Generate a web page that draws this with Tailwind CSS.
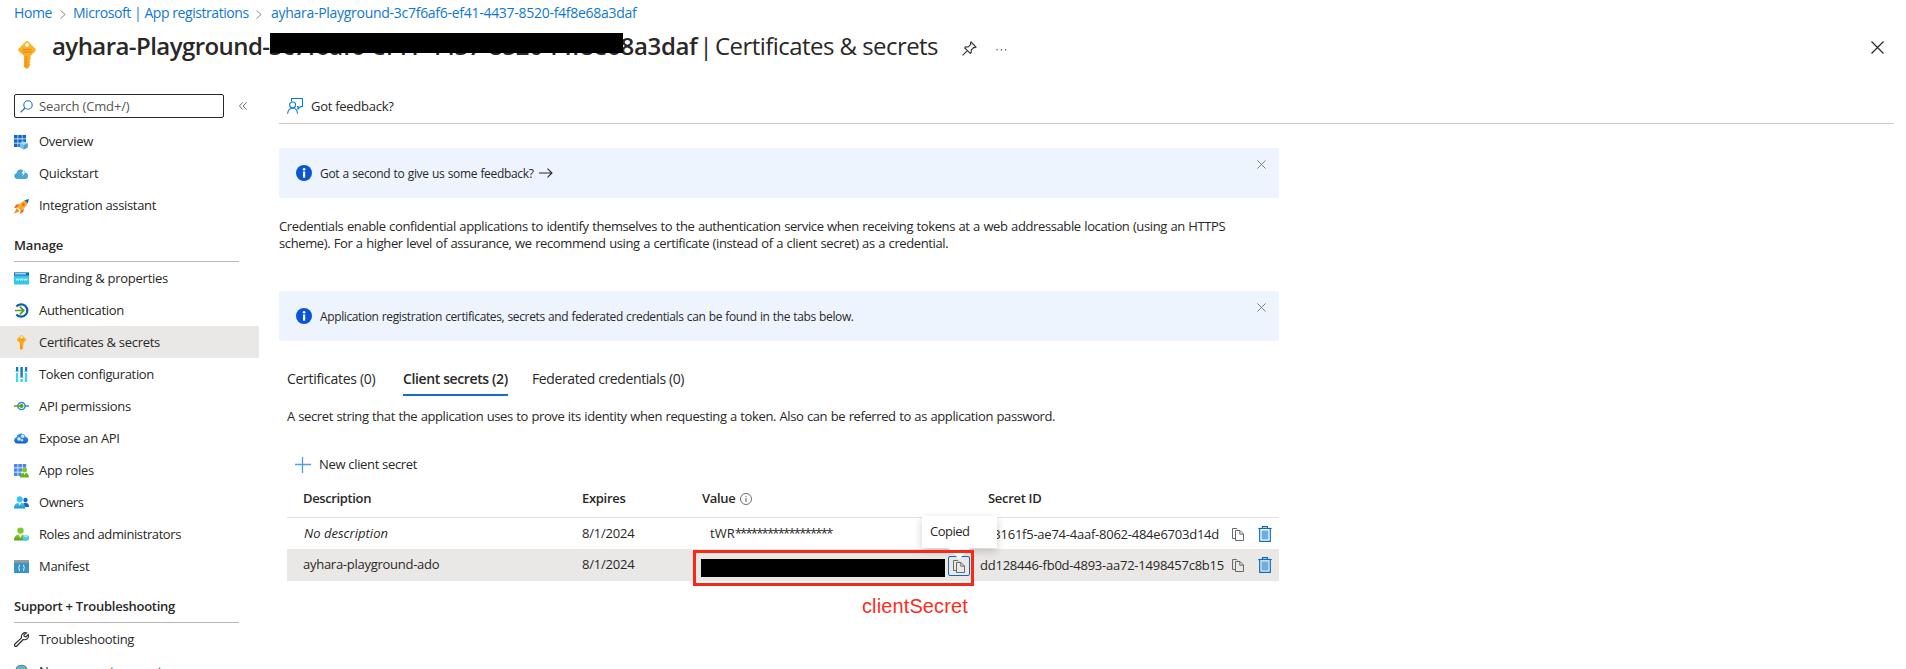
<!DOCTYPE html>
<html lang="en">
<head>
<meta charset="utf-8">
<title>Certificates &amp; secrets</title>
<script src="https://cdn.jsdelivr.net/npm/@tailwindcss/browser@4"></script>
</head>
<body class="h-[669px] overflow-hidden bg-white font-['Open_Sans',sans-serif] text-[13px] text-[#292827]">
<svg class="absolute h-0 w-0">
  <defs>
    <linearGradient id="gold" x1="0" y1="0" x2="0" y2="1"><stop offset="0" stop-color="#fdb92e"/><stop offset="1" stop-color="#fa9f1c"/></linearGradient>
    <linearGradient id="blue" x1="0" y1="0" x2="0" y2="1"><stop offset="0" stop-color="#3f9bee"/><stop offset="1" stop-color="#1160c8"/></linearGradient>
    <linearGradient id="cyan" x1="0" y1="0" x2="0" y2="1"><stop offset="0" stop-color="#3fd3f5"/><stop offset="1" stop-color="#1c93cf"/></linearGradient>
    <linearGradient id="green" x1="0" y1="0" x2="0" y2="1"><stop offset="0" stop-color="#8ed334"/><stop offset="1" stop-color="#569f16"/></linearGradient>
    <symbol id="key" viewBox="0 0 18 28">
      <path d="M7.6.6a2 2 0 0 1 2.8 0l6.8 6.9a2 2 0 0 1 0 2.8l-4.6 4.5v3.4l-1.3 1.3 1.3 1.3-1.3 1.4 1.3 1.4-1.3 1.5V26L9 28l-3-2V14.8L.8 10.300a2 2 0 0 1 0-2.800z" fill="url(#gold)"/>
      <circle cx="9" cy="4" r="1.9" fill="#fff"/><path d="M4.500 8.500h9M4.500 11h9" stroke="#e8921a" stroke-width="1.300"/><path d="M8 15v11" stroke="#f28c13" stroke-width="1.200"/>
    </symbol>
    <symbol id="copy" viewBox="0 0 12 13">
      <path d="M3.500 10.500h-3V.5h4.200l1 1M3.500 2.500h4.500l3.500 3.500v6.500h-8z" fill="none" stroke="#6b6a69"/><path d="M7.800 2.700V6.200h3.500" fill="none" stroke="#6b6a69"/>
    </symbol>
    <symbol id="trash" viewBox="0 0 14 16">
      <path d="M4.500 2V.6h5V2" fill="none" stroke="#0f6cbd" stroke-width="1.100"/><path d="M.3 2.500h13.400" stroke="#0f6cbd" stroke-width="1.200"/><path d="M1.700 2.500v12.900h10.600V2.500" fill="none" stroke="#0f6cbd" stroke-width="1.200"/><rect x="3.600" y="4.500" width="6.800" height="9" fill="#69aee4"/>
    </symbol>
    <symbol id="info" viewBox="0 0 16 16"><circle cx="8" cy="8" r="8" fill="#0a55d6"/><rect x="7" y="6.500" width="2.200" height="6.200" fill="#fff"/><circle cx="8.100" cy="4.300" r="1.300" fill="#fff"/></symbol>
    <symbol id="dismiss" viewBox="0 0 9 9"><path d="M.4.4l8.200 8.200M8.600.4L.4 8.600" stroke="#6f7681" stroke-width=".9"/></symbol>
  </defs>
</svg>

<nav class="flex h-[25px] items-center pl-[14px] text-sm text-[#0f78d4]">
  <span class="tracking-[-0.4px]">Home</span>
  <svg class="ml-[8px] mt-1 h-[9px] w-[6px]" viewBox="0 0 6 9"><path d="M.5.4l4.600 4.100L.5 8.600" fill="none" stroke="#8a8886"/></svg>
  <span class="ml-[7px] w-[183px] whitespace-nowrap tracking-[-0.44px]">Microsoft | App registrations</span>
  <svg class="mt-1 h-[9px] w-[6px]" viewBox="0 0 6 9"><path d="M.5.4l4.600 4.100L.5 8.600" fill="none" stroke="#8a8886"/></svg>
  <span class="ml-[9px] tracking-[-0.28px]">ayhara-Playground-3c7f6af6-ef41-4437-8520-f4f8e68a3daf</span>
</nav>

<header class="flex h-[41px] items-center pl-[18px] pr-[18px]">
  <svg class="mt-[19px] h-7 w-[18px]"><use href="#key"/></svg>
  <h1 class="relative ml-4 flex whitespace-nowrap text-2xl leading-[41px]">
    <span class="w-[217px] font-semibold tracking-[-0.56px]">ayhara-Playground-</span>
    <span class="w-[429px] font-semibold tracking-[-0.32px]">3c7f6af6-ef41-4437-8520-f4f8e68a3daf</span>
    <span class="w-[16px] text-center">|</span>
    <span class="ml-px w-[225px] tracking-[-0.55px]">Certificates &amp; secrets</span>
    <span class="absolute left-[218px] top-2 h-[20px] w-[353px] bg-black"></span>
  </h1>
  <svg class="ml-[22px] mt-[5px] h-[15px] w-[15px]" viewBox="0 0 15 15"><path d="M9 1l5 5-1.300.6-.9-.2-2.600 2.600.1 2.400-1 1.100L2.700 6.900l1-1 2.500.1L8.700 3.300 8.400 2zM5.300 9.700L.6 14.400" fill="none" stroke="#333" stroke-width="1.100"/></svg>
  <svg class="ml-[19px] mt-[9px] h-[2px] w-[11px]" viewBox="0 0 11 2"><path d="M.5 0h1.200v1.500H.5zM4.800 0H6v1.500H4.800zM9.100 0h1.200v1.500H9.100z" fill="#605e5c"/></svg>
  <svg class="ml-auto mr-[4px] mt-[3px] h-[13px] w-[13px]" viewBox="0 0 13 13"><path d="M.5.5l12 12M12.500.5l-12 12" stroke="#292827" stroke-width="1.200"/></svg>
</header>

<div class="flex">
  <aside class="w-[259px] pt-7">
    <div class="flex items-center pl-[14px]">
      <div class="flex h-6 w-[210px] items-center rounded-[2px] border border-[#292827] pl-[5px]">
        <svg class="h-[13px] w-[13px]" viewBox="0 0 13 13"><circle cx="8" cy="5" r="4.200" fill="none" stroke="#1b6ec2" stroke-width="1.100"/><path d="M5 8L.6 12.400" stroke="#1b6ec2" stroke-width="1.200"/></svg>
        <span class="ml-1.5 mt-0.5 tracking-[-0.15px] text-[#565554]">Search (Cmd+/)</span>
      </div>
      <svg class="ml-[15px] h-2 w-2" viewBox="0 0 8 8"><path d="M3.800.3L.5 4l3.300 3.700M7.500.3L4.200 4l3.300 3.700" fill="none" stroke="#605e5c" stroke-width=".9"/></svg>
    </div>

    <ul class="mt-2">
      <li class="flex h-8 items-center gap-2.5 pl-[14px]">
        <svg class="h-[15px] w-[15px]" viewBox="0 0 15 15"><path d="M0 0h3.600v3.600H0zM4.200 0h3.600v3.600H4.200zM8.400 0H12v3.600H8.400zM0 4.200h3.600v3.600H0zM4.200 4.200h3.600v3.600H4.200zM8.400 4.200H12v3.600H8.400zM0 8.400h3.600V12H0zM4.200 8.400h3.600V12H4.200z" fill="#0f69c9"/><path d="M9.700 6.600l4 1.600v4.400l-4 1.800-4-1.800V8.200z" fill="#74c0e8"/><path d="M9.700 9.900v4.500l4-1.800V8.200z" fill="#4b9fd6"/><path d="M5.700 8.200l4 1.700 4-1.700-4-1.600z" fill="#a9daf3"/></svg>
        <span class="tracking-[-0.3px]">Overview</span></li>
      <li class="flex h-8 items-center gap-2.5 pl-[14px]">
        <svg class="h-[15px] w-[15px]" viewBox="0 0 15 15"><path d="M3 12a3 3 0 0 1-.4-5.900 4.500 4.500 0 0 1 8.600-.7A3.400 3.400 0 0 1 11.800 12z" fill="#4aa6d4"/><path d="M9.800 2.500L7.600 6.400h1.600L8.300 9.500l3-4.200H9.700L11 2.500z" fill="#fff"/></svg>
        <span class="tracking-[-0.32px]">Quickstart</span></li>
      <li class="flex h-8 items-center gap-2.5 pl-[14px]">
        <svg class="h-[15px] w-[15px]" viewBox="0 0 15 15"><path d="M5.500 5L2 5.700 0 9l3.600-.6zM10 9.500L9.200 13 6 15l.7-3.600z" fill="#e8622a"/><path d="M13.900 1C9.500 1 6 3.700 3.300 8.300L6.700 11.600C11.200 9 14 5.500 13.900 1z" fill="#fbab23"/><path d="M15 0l-4.600 1.200 3.400 3.300z" fill="#1266c4"/><path d="M2.600 9.200L0 14.700l5.600-2.500z" fill="#f58a1f"/><circle cx="9.400" cy="5.600" r="1.300" fill="#e8622a"/></svg>
        <span class="tracking-[-0.32px]">Integration assistant</span></li>
    </ul>

    <h2 class="ml-[14px] mt-[7px] h-[33px] w-[225px] border-b border-[#b9b8b7] font-semibold leading-8 tracking-[-0.17px]">Manage</h2>
    <ul>
      <li class="flex h-8 items-center gap-2.5 pl-[14px]">
        <svg class="h-[15px] w-[15px]" viewBox="0 0 15 15"><path d="M0 1.500h15v12H0z" fill="#32c8ea"/><path d="M0 1.500h15v3H0z" fill="#0f6bb8"/><path d="M1 2.300h11v1.100H1z" fill="#f2f8fc"/><path d="M2 7.500l.8 2 .9-2 .8 2 .8-2M6 7.500l.8 2 .9-2 .8 2 .8-2M10 7.500l.8 2 .9-2 .8 2 .8-2" fill="none" stroke="#d9f6fd" stroke-width=".8"/></svg>
        <span class="mt-0.5 tracking-[-0.26px]">Branding &amp; properties</span></li>
      <li class="flex h-8 items-center gap-2.5 pl-[14px]">
        <svg class="h-[15px] w-[15px]" viewBox="0 0 15 15"><path d="M2.400 3.500A6.200 6.200 0 1 1 2.400 11.500" fill="none" stroke="#0d5fb5" stroke-width="2.300"/><path d="M1 7.500h8M5.800 3.600l4 3.900-4 3.900" fill="none" stroke="#57a019" stroke-width="1.700"/></svg>
        <span class="mt-0.5 tracking-[-0.3px]">Authentication</span></li>
      <li class="flex h-8 items-center gap-2.5 bg-[#e9e8e6] pl-[14px]">
        <svg class="h-[15px] w-[15px]"><use href="#key"/></svg>
        <span class="mt-0.5 tracking-[-0.29px]">Certificates &amp; secrets</span></li>
      <li class="flex h-8 items-center gap-2.5 pl-[14px]">
        <svg class="h-[15px] w-[15px]" viewBox="0 0 15 15"><path d="M2 0h2.200v4.500H2zM6.400 0h2.400v10.500H6.400zM11 0h2.200v4.500H11z" fill="#1673c4"/><path d="M2 5.800h2.200V15H2zM6.400 12h2.400v3H6.400zM11 5.800h2.200V15H11z" fill="#3fd4f0"/><path d="M5.600 10.500h1M8.600 10.500h1M10.200 4.500h3.800M1.300 4.500h3.700" stroke="#5fc6ea" stroke-width=".8"/></svg>
        <span class="mt-0.5 tracking-[-0.34px]">Token configuration</span></li>
      <li class="flex h-8 items-center gap-2.5 pl-[14px]">
        <svg class="h-[15px] w-[15px]" viewBox="0 0 15 15"><circle cx="7.500" cy="7" r="3.600" fill="none" stroke="#2b8fc9" stroke-width="1.500"/><path d="M11 7h4" stroke="#2b8fc9" stroke-width="1.500"/><path d="M0 7h6" stroke="#57a019" stroke-width="1.500"/><circle cx="7.500" cy="7" r="2" fill="#57a019"/></svg>
        <span class="mt-0.5 tracking-[-0.32px]">API permissions</span></li>
      <li class="flex h-8 items-center gap-2.5 pl-[14px]">
        <svg class="h-[15px] w-[15px]" viewBox="0 0 15 15"><path d="M3.200 12.500a3.200 3.200 0 0 1-.6-6.300 4.700 4.700 0 0 1 9-.5A3.500 3.500 0 0 1 11.600 12.500z" fill="url(#blue)"/><circle cx="8.700" cy="5.200" r="1.700" fill="#dcecfb"/><circle cx="5" cy="8" r="1.800" fill="#dcecfb"/><circle cx="8" cy="9.200" r="1.200" fill="#b9d8f6"/></svg>
        <span class="mt-0.5 tracking-[-0.33px]">Expose an API</span></li>
      <li class="flex h-8 items-center gap-2.5 pl-[14px]">
        <svg class="h-[15px] w-[15px]" viewBox="0 0 15 15"><path d="M0 1h3.600v3.600H0zM4.300 1h3.600v3.600H4.300zM8.600 1h3.600v3.600H8.600zM0 5.200h3.600v3.600H0zM4.300 5.200h3.600v3.600H4.300zM0 9.400h3.600V13H0zM4.300 9.400h3V13h-3z" fill="#4a86e8"/><circle cx="10.500" cy="6.800" r="2.500" fill="#7cc72c"/><path d="M6 14.500c0-3 1.500-4.700 4.500-4.700s4.500 1.700 4.500 4.700z" fill="#66b31f"/><path d="M9.500 9.800l1 2.200 1-2.200z" fill="#fff"/></svg>
        <span class="mt-0.5 tracking-[-0.28px]">App roles</span></li>
      <li class="flex h-8 items-center gap-2.5 pl-[14px]">
        <svg class="h-[15px] w-[15px]" viewBox="0 0 15 15"><circle cx="11.500" cy="5" r="2.200" fill="#1268c6"/><path d="M8.500 12c0-3 1-4.300 3-4.300s3.500 1.300 3.500 4.300z" fill="#1268c6"/><circle cx="5.700" cy="4.200" r="3" fill="#3ac4ea"/><path d="M0 13.500c0-4 2-5.700 5.700-5.700s5.500 1.700 5.500 5.700z" fill="url(#cyan)"/><path d="M4.300 7.800l1.400 2.700 1.400-2.700z" fill="#fff"/></svg>
        <span class="mt-0.5 tracking-[-0.4px]">Owners</span></li>
      <li class="flex h-8 items-center gap-2.5 pl-[14px]">
        <svg class="h-[15px] w-[15px]" viewBox="0 0 15 15"><circle cx="6.500" cy="3.600" r="3.200" fill="#7fc72f"/><path d="M0 13.500c0-4.300 2-6.100 6.200-6.100s5.800 1.800 5.800 6.100z" fill="url(#green)"/><path d="M4.700 7.400l1.700 3.600 1.700-3.600z" fill="#fff"/><path d="M12 7.800l3 1.300v3.700l-3 1.500-3-1.500V9.100z" fill="#4cc9ee"/><path d="M9 9.100l3 1.300 3-1.300-3-1.300z" fill="#a5e6f8"/></svg>
        <span class="mt-0.5 tracking-[-0.4px]">Roles and administrators</span></li>
      <li class="flex h-8 items-center gap-2.5 pl-[14px]">
        <svg class="h-[15px] w-[15px]" viewBox="0 0 15 15"><path d="M0 1h15v13H0z" fill="#3896c4"/><path d="M0 1h15v2.700H0z" fill="#9c9c9c"/><path d="M6 6.200H5.200v2l-.8.6.8.6v2H6M9 6.200h.8v2l.8.6-.8.6v2H9" fill="none" stroke="#fff" stroke-width=".8"/></svg>
        <span class="mt-0.5 tracking-[-0.3px]">Manifest</span></li>
    </ul>

    <h2 class="ml-[14px] mt-2 h-[33px] w-[225px] border-b border-[#b9b8b7] font-semibold leading-8 tracking-[-0.26px]">Support + Troubleshooting</h2>
    <ul>
      <li class="flex h-8 items-center gap-2.5 pl-[14px]">
        <svg class="h-[15px] w-[15px]" viewBox="0 0 15 15"><path d="M12.600.9a3.900 3.900 0 0 0-5 4.900L.9 12a1.400 1.400 0 0 0 2 2L9.200 7.500a3.900 3.900 0 0 0 5-5l-2.300 2.300-1.700-.4-.3-1.500z" fill="none" stroke="#292827" stroke-width="1.100"/></svg>
        <span class="mt-0.5 tracking-[-0.3px]">Troubleshooting</span></li>
      <li class="flex h-8 items-center gap-2.5 pl-[14px]">
        <svg class="h-[15px] w-[15px]" viewBox="0 0 15 15"><circle cx="7.500" cy="7" r="5" fill="#35c3e8"/><path d="M2 6a5.600 5.600 0 0 1 11 0" fill="none" stroke="#7d7c7b" stroke-width="1.300"/></svg>
        <span class="mt-0.5 tracking-[-0.28px]">New support request</span></li>
    </ul>
  </aside>

  <main class="ml-5 w-[1615px] pt-[22px]">
    <div class="flex h-9 items-center border-b border-[#cbcac9] pl-2">
      <svg class="h-4 w-4" viewBox="0 0 16 16"><path d="M4.500 3.500v-3h11v8h-2l-2.500 2.500V8.500h-1" fill="none" stroke="#0f78d4" stroke-width="1.100"/><circle cx="5.600" cy="7" r="3" fill="#fff" stroke="#0f78d4" stroke-width="1.100"/><path d="M.6 15.800c.3-3.700 2-5.600 5-5.600s4.700 1.900 5 5.600" fill="none" stroke="#0f78d4" stroke-width="1.100"/></svg>
      <span class="ml-2 mt-0.5 tracking-[-0.27px]">Got feedback?</span>
    </div>

    <div class="w-[1000px]">
      <div class="mt-6 flex h-[50px] items-center rounded-[2px] bg-[#edf4fe] pl-[17px] pr-[13px] text-xs [word-spacing:0.5px]">
        <svg class="h-4 w-4"><use href="#info"/></svg>
        <span class="ml-2 mt-px tracking-[-0.33px]">Got a second to give us some feedback?</span>
        <svg class="ml-[5px] h-[10px] w-[14px]" viewBox="0 0 14 10"><path d="M0 5h12.800M8.500.6L13 5 8.500 9.400" fill="none" stroke="#292827" stroke-width="1.100"/></svg>
        <svg class="mb-[17px] ml-auto h-[9px] w-[9px]"><use href="#dismiss"/></svg>
      </div>

      <p class="mt-5 whitespace-nowrap leading-[17px] tracking-[-0.385px] [word-spacing:0.5px]">Credentials enable confidential applications to identify themselves to the authentication service when receiving tokens at a web addressable location (using an HTTPS<br>scheme). For a higher level of assurance, we recommend using a certificate (instead of a client secret) as a credential.</p>

      <div class="mt-[39px] flex h-[50px] items-center rounded-[2px] bg-[#edf4fe] pl-[17px] pr-[13px] text-xs [word-spacing:0.5px]">
        <svg class="h-4 w-4"><use href="#info"/></svg>
        <span class="ml-2 mt-px tracking-[-0.375px]">Application registration certificates, secrets and federated credentials can be found in the tabs below.</span>
        <svg class="mb-[17px] ml-auto h-[9px] w-[9px]"><use href="#dismiss"/></svg>
      </div>

      <div class="pl-2">
        <div class="mt-[21px] flex h-[34px] whitespace-nowrap text-sm leading-[33px]">
          <span class="w-[116px] tracking-[-0.3px]">Certificates (0)</span>
          <span class="w-[105px] border-b-2 border-[#0f6fcb] font-semibold tracking-[-0.38px]">Client secrets (2)</span>
          <span class="ml-6 tracking-[-0.39px]">Federated credentials (0)</span>
        </div>
        <p class="mt-3 leading-[17px] tracking-[-0.39px] [word-spacing:0.5px]">A secret string that the application uses to prove its identity when requesting a token. Also can be referred to as application password.</p>
        <div class="mt-6 flex h-8 items-center pl-2">
          <svg class="h-4 w-4" viewBox="0 0 16 16"><path d="M0 7.500h16M7.500 0v16" stroke="#4f9fdf" stroke-width="1.300"/></svg>
          <span class="ml-2 tracking-[-0.32px]">New client secret</span>
        </div>

        <div class="relative">
          <div class="grid h-[37px] grid-cols-[279px_120px_278px_1fr] items-center border-b border-[#e3e2e0] pl-4 font-semibold">
            <span class="tracking-[-0.37px]">Description</span>
            <span class="tracking-[-0.3px]">Expires</span>
            <span class="flex items-center tracking-[-0.3px]">Value
              <svg class="ml-[4px] h-3 w-3" viewBox="0 0 12 12"><circle cx="6" cy="6" r="5.500" fill="none" stroke="#605e5c" stroke-width=".9"/><path d="M6 5v4M6 3v1" stroke="#605e5c"/></svg></span>
            <span class="pl-2 tracking-[-0.3px]">Secret ID</span>
          </div>
          <div class="grid h-[31px] grid-cols-[279px_120px_278px_1fr] items-center whitespace-nowrap pl-4">
            <span class="pl-px italic tracking-[0.03px]">No description</span>
            <span class="tracking-[-0.2px]">8/1/2024</span>
            <span class="pl-2">tWR<span class="tracking-[-1.78px]">******************</span></span>
            <span class="flex items-center">
              <span class="mt-0.5 w-[239px] text-right tracking-[-0.237px]">3161f5-ae74-4aaf-8062-484e6703d14d</span>
              <svg class="ml-[13px] mt-px h-[13px] w-3"><use href="#copy"/></svg>
              <svg class="ml-[14px] mt-px h-4 w-[14px]"><use href="#trash"/></svg>
            </span>
          </div>
          <div class="grid h-8 grid-cols-[279px_120px_278px_1fr] items-center whitespace-nowrap bg-[#e9e8e6] pl-4">
            <span class="tracking-[-0.27px]">ayhara-playground-ado</span>
            <span class="tracking-[-0.2px]">8/1/2024</span>
            <span class="-ml-px flex items-center">
              <span class="mt-[5px] h-[18px] w-[244px] bg-black"></span>
              <span class="ml-[3px] mt-0.5 flex h-5 w-[22px] items-center justify-center rounded-[2px] border border-[#0f6cbd]"><svg class="h-[13px] w-3"><use href="#copy"/></svg></span>
            </span>
            <span class="flex items-center">
              <span class="mt-0.5 w-[239px] tracking-[-0.237px]">dd128446-fb0d-4893-aa72-1498457c8b15</span>
              <svg class="ml-[13px] h-[13px] w-3"><use href="#copy"/></svg>
              <svg class="ml-[14px] h-4 w-[14px]"><use href="#trash"/></svg>
            </span>
          </div>

          <!-- Copy confirmation callout -->
          <div class="absolute left-[635px] top-[35px] flex h-8 w-[75px] items-center bg-white pl-[8px] tracking-[-0.5px] shadow-[0_3px_8px_rgba(0,0,0,0.2)]">Copied
            <svg class="absolute left-[26px] top-8 h-[11px] w-[22px]" viewBox="0 0 22 11"><path d="M0 0h22L11 11z" fill="#fff"/></svg>
          </div>
          <!-- Highlight around the secret value -->
          <div class="absolute left-[406px] top-[69px] h-9 w-[281px] border-[3px] border-[#fb2818]"></div>
          <div class="absolute left-[575px] top-[111px] whitespace-nowrap font-['Liberation_Sans',sans-serif] text-[20px] leading-7 tracking-[0.12px] text-[#fb2c1e]">clientSecret</div>
        </div>
      </div>
    </div>
  </main>
</div>
</body>
</html>
